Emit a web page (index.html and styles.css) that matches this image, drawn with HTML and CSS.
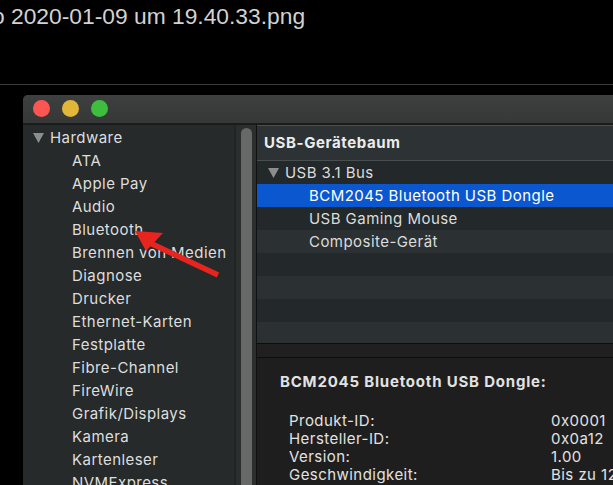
FILE: index.html
```html
<!DOCTYPE html>
<html lang="de">
<head>
<meta charset="utf-8">
<title>Systeminformationen</title>
<link rel="stylesheet" href="styles.css">
</head>
<body>
<div class="top"><span class="fname">o 2020-01-09 um 19.40.33.png</span></div>
<div class="stage">
  <div class="window">
    <div class="titlebar">
      <span class="light red"></span><span class="light yellow"></span><span class="light green"></span>
    </div>
    <div class="main">
      <div class="sidebar">
        <div class="srow group"><svg class="tri" viewBox="0 0 10 10"><polygon points="0,1 10,1 5,10"/></svg><span>Hardware</span></div>
        <div class="srow item">ATA</div>
        <div class="srow item">Apple Pay</div>
        <div class="srow item">Audio</div>
        <div class="srow item">Bluetooth</div>
        <div class="srow item">Brennen von Medien</div>
        <div class="srow item">Diagnose</div>
        <div class="srow item">Drucker</div>
        <div class="srow item">Ethernet-Karten</div>
        <div class="srow item">Festplatte</div>
        <div class="srow item">Fibre-Channel</div>
        <div class="srow item">FireWire</div>
        <div class="srow item">Grafik/Displays</div>
        <div class="srow item">Kamera</div>
        <div class="srow item">Kartenleser</div>
        <div class="srow item">NVMExpress</div>
      </div>
      <div class="scroll"><div class="knob"></div></div>
      <div class="content">
        <div class="tree">
          <div class="thead">USB-Gerätebaum</div>
          <div class="trow dark"><svg class="tri" viewBox="0 0 10 10"><polygon points="0,1 10,1 5,10"/></svg><span>USB 3.1 Bus</span></div>
          <div class="trow sel child">BCM2045 Bluetooth USB Dongle</div>
          <div class="trow dark child">USB Gaming Mouse</div>
          <div class="trow lite child">Composite-Gerät</div>
          <div class="trow dark"></div>
          <div class="trow lite"></div>
          <div class="trow dark"></div>
          <div class="trow lite"></div>
        </div>
        <div class="splitter"></div>
        <div class="detail">
          <div class="dtitle">BCM2045 Bluetooth USB Dongle:</div>
          <div class="props">
            <span>Produkt-ID:</span><span>0x0001</span>
            <span>Hersteller-ID:</span><span>0x0a12</span>
            <span>Version:</span><span>1.00</span>
            <span>Geschwindigkeit:</span><span>Bis zu 12 MBit/s</span>
          </div>
        </div>
      </div>
    </div>
  </div>
</div>
<svg class="arrow" width="613" height="485" viewBox="0 0 613 485">
  <line x1="218" y1="275" x2="150" y2="243" stroke="#e8241e" stroke-width="5.5"/>
  <polygon points="135,231 163,233 146,251" fill="#e8241e"/>
</svg>
</body>
</html>
```
FILE: styles.css
```css
* { box-sizing: border-box; }
html, body { margin: 0; padding: 0; }
body {
  width: 613px;
  height: 485px;
  overflow: hidden;
  background: #000;
  position: relative;
  font-family: "Inter", "Liberation Sans", sans-serif;
}
.top {
  height: 85px;
  border-bottom: 1px solid #3b3b3b;
  overflow: hidden;
  white-space: nowrap;
}
.fname {
  display: block;
  margin-left: -8px;
  padding-top: 2px;
  font-family: "Liberation Sans", sans-serif;
  font-size: 22.8px;
  line-height: 28px;
  color: #d2d2d2;
}
.stage {
  padding: 10px 0 0 23px;
}
.window {
  width: 640px;
  height: 400px;
  background: #262a2b;
  border-radius: 5px 0 0 0;
  overflow: hidden;
}
.titlebar {
  height: 30px;
  display: flex;
  align-items: center;
  gap: 12px;
  padding: 0 0 2px 10px;
  background: linear-gradient(#3e4040, #363838);
  border-bottom: 2px solid #1a1b1b;
}
.light {
  width: 17px;
  height: 17px;
  border-radius: 50%;
  display: block;
}
.red { background: #fc5652; }
.yellow { background: #e2b639; }
.green { background: #3ebd3f; }
.main {
  display: flex;
  height: 370px;
}
.sidebar {
  width: 213px;
  flex: none;
  padding-top: 1px;
  border-right: 2px solid #202424;
  background: #262a2b;
  color: #dedede;
  font-size: 15px;
  letter-spacing: 0.45px;
}
.srow {
  height: 23px;
  line-height: 23px;
  white-space: nowrap;
}
.srow.group {
  display: flex;
  align-items: center;
  padding-left: 10px;
}
.tri {
  width: 11px;
  height: 11px;
  fill: #8d8d8d;
  margin-right: 6px;
  flex: none;
}
.srow.item { padding-left: 49px; }
.scroll {
  width: 21px;
  flex: none;
  background: #2c2e2e;
  border-right: 1px solid #101212;
  padding: 3px 4px 0 5px;
}
.knob {
  height: 400px;
  background: #686868;
  border-radius: 6px;
}
.content {
  flex: 1;
  display: flex;
  flex-direction: column;
  background: #1e1e1e;
}
.tree {
  height: 218px;
  overflow: hidden;
  flex: none;
  color: #dcdcdc;
  font-size: 15px;
  letter-spacing: 0.45px;
}
.thead {
  height: 36px;
  border-top: 1px solid #47504f;
  border-bottom: 1px solid #47504f;
  background: #2d3335;
  padding-left: 7px;
  line-height: 33px;
  font-weight: 700;
  color: #ececec;
  font-size: 15px;
  letter-spacing: 0.6px;
}
.trow {
  height: 23px;
  line-height: 23px;
  white-space: nowrap;
  display: flex;
  align-items: center;
  padding-left: 11px;
}
.trow.child { padding-left: 52px; }
.trow.dark { background: #23292a; }
.trow.lite { background: #2b3132; }
.trow.sel { background: #0b57cf; color: #fff; }
.splitter {
  height: 15px;
  flex: none;
  background: #202020;
  border-top: 1px solid #0d0d0d;
  border-bottom: 1px solid #0d0d0d;
}
.detail {
  flex: 1;
  padding: 14px 0 0 23px;
  color: #e2e2e2;
  font-size: 15px;
  letter-spacing: 0.45px;
  white-space: nowrap;
}
.dtitle {
  font-weight: 700;
  line-height: 20px;
  margin-bottom: 20px;
  letter-spacing: 0.8px;
}
.props {
  display: grid;
  grid-template-columns: 262px auto;
  padding-left: 9px;
  line-height: 18px;
}
.arrow {
  position: absolute;
  left: 0;
  top: 0;
}
```
